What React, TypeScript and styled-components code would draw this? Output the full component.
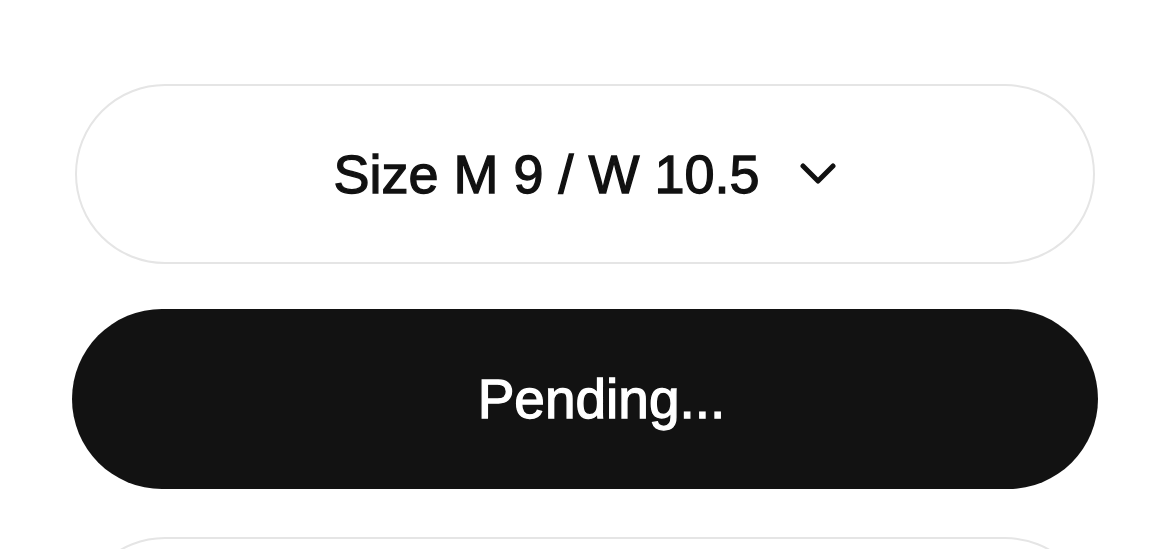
import styled, { createGlobalStyle } from "styled-components";

const GlobalStyle = createGlobalStyle`
  html, body {
    margin: 0;
    padding: 0;
    background: #ffffff;
  }
  body {
    font-family: "Liberation Sans", Arial, sans-serif;
  }
`;

const Page = styled.div`
  display: flex;
  flex-direction: column;
  align-items: center;
  padding-top: 84px;
  height: 549px;
  box-sizing: border-box;
  overflow: hidden;
`;

const Pill = styled.button<{ $dark?: boolean; $width: number; $gapAfter: number }>`
  box-sizing: border-box;
  width: ${(p) => p.$width}px;
  height: 180px;
  flex-shrink: 0;
  border-radius: 90px;
  border: ${(p) => (p.$dark ? "none" : "2px solid #e5e5e5")};
  background: ${(p) => (p.$dark ? "#121212" : "#ffffff")};
  color: ${(p) => (p.$dark ? "#ffffff" : "#111111")};
  display: flex;
  align-items: center;
  justify-content: center;
  gap: 40px;
  font-family: "Liberation Sans", Arial, sans-serif;
  font-size: 54px;
  font-weight: 400;
  -webkit-text-stroke: 1.3px currentColor;
  padding: 0 0 0 ${(p) => (p.$dark ? 34 : 0)}px;
  margin-bottom: ${(p) => p.$gapAfter}px;
  cursor: pointer;
`;

const Label = styled.span<{ $size?: number }>`
  line-height: 1;
  font-size: ${(p) => p.$size ?? 54}px;
`;

const Chevron = () => (
  <svg width="36" height="22" viewBox="0 0 36 22" fill="none">
    <polyline
      points="3,3 18,18 33,3"
      stroke="#111111"
      strokeWidth="5"
      strokeLinecap="round"
      strokeLinejoin="round"
    />
  </svg>
);

const App = () => {
  return (
    <>
      <GlobalStyle />
      <Page>
        <Pill $width={1020} $gapAfter={45}>
          <Label>Size M 9 / W 10.5</Label>
          <Chevron />
        </Pill>
        <Pill $dark $width={1026} $gapAfter={48}>
          <Label $size={55}>Pending...</Label>
        </Pill>
        <Pill $width={1020} $gapAfter={0} />
      </Page>
    </>
  );
};

export default App;
